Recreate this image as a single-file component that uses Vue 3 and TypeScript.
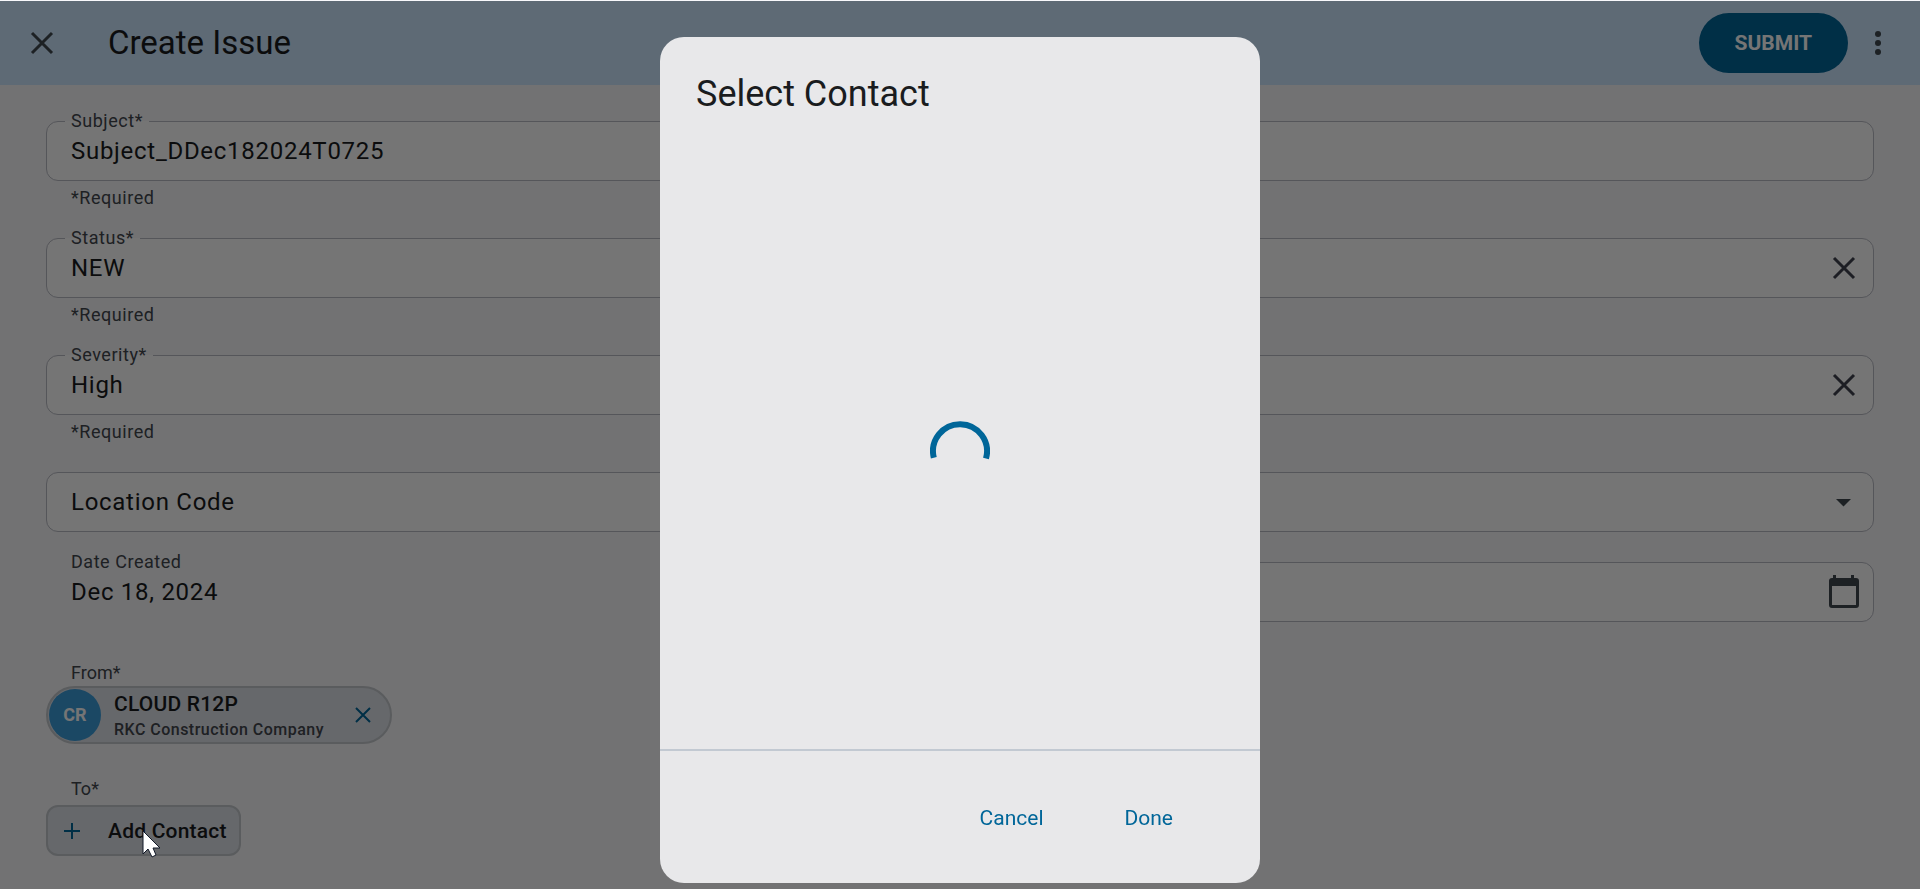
<script setup lang="ts">
import { ref } from 'vue'

interface RequiredField {
  id: string
  label: string
  value: string
  clearable: boolean
}

const requiredFields = ref<RequiredField[]>([
  { id: 'subject', label: 'Subject*', value: 'Subject_DDec182024T0725', clearable: false },
  { id: 'status', label: 'Status*', value: 'NEW', clearable: true },
  { id: 'severity', label: 'Severity*', value: 'High', clearable: true },
])
const dueDate = ref('')
</script>

<template>
  <div class="page">
    <header class="toolbar">
      <button class="icon-button" type="button" aria-label="Close">
        <svg width="36" height="36" viewBox="0 0 36 36"><path d="M8 8 28 28M28 8 8 28" fill="none" stroke="#3f484f" stroke-width="3" /></svg>
      </button>
      <h1>Create Issue</h1>
      <button class="submit" type="submit" form="issue">SUBMIT</button>
      <button class="icon-button menu" type="button" aria-label="More options">
        <svg width="36" height="36" viewBox="0 0 36 36" fill="#3f484f"><circle cx="18" cy="9" r="3" /><circle cx="18" cy="18" r="3" /><circle cx="18" cy="27" r="3" /></svg>
      </button>
    </header>

    <form id="issue" class="form" @submit.prevent>
      <div v-for="field in requiredFields" :key="field.id" class="group">
        <div class="box">
          <label class="notch" :for="field.id">{{ field.label }}</label>
          <input :id="field.id" v-model="field.value" class="value" type="text" />
          <button v-if="field.clearable" class="icon-button" type="button" aria-label="Clear" @click="field.value = ''">
            <svg width="36" height="36" viewBox="0 0 36 36"><path d="M8 8 28 28M28 8 8 28" fill="none" stroke="#3f434f" stroke-width="3" /></svg>
          </button>
        </div>
        <p class="hint">*Required</p>
      </div>

      <div class="box">
        <select class="value select" aria-label="Location Code">
          <option>Location Code</option>
        </select>
        <svg class="arrow" width="36" height="36" viewBox="0 0 36 36"><path d="M10 15h15l-7.500 7.500z" fill="#3f484f" /></svg>
      </div>

      <div class="dates">
        <div class="created">
          <span class="caption">Date Created</span>
          <span class="text">Dec 18, 2024</span>
        </div>
        <div class="box">
          <input v-model="dueDate" class="value" type="text" aria-label="Due date" />
          <button class="icon-button" type="button" aria-label="Open calendar">
            <svg width="36" height="36" viewBox="0 0 36 36"><path fill="#3f484f" fill-rule="evenodd" d="M7 1h3v3h15V1h3v3h2q3 0 3 3v24q0 3-3 3H6q-3 0-3-3V7q0-3 3-3h1zM6 12v19h24V12z" /></svg>
          </button>
        </div>
      </div>

      <section class="people from">
        <h2 class="caption">From*</h2>
        <div class="chip">
          <span class="avatar">CR</span>
          <span class="who">
            <span class="name">CLOUD R12P</span>
            <span class="company">RKC Construction Company</span>
          </span>
          <button class="remove" type="button" aria-label="Remove CLOUD R12P">
            <svg width="18" height="18" viewBox="0 0 18 18"><path d="M2 2 16 16M16 2 2 16" fill="none" stroke="#006699" stroke-width="2" /></svg>
          </button>
        </div>
      </section>

      <section class="people">
        <h2 class="caption">To*</h2>
        <button class="add" type="button">
          <svg width="18" height="18" viewBox="0 0 18 18"><path d="M9 1v16M1 9h16" fill="none" stroke="#006699" stroke-width="2" /></svg>
          Add Contact
        </button>
      </section>
    </form>
  </div>

  <div class="scrim">
    <div class="dialog" role="dialog" aria-modal="true" aria-labelledby="dialog-title">
      <h2 id="dialog-title">Select Contact</h2>
      <div class="loading" role="status" aria-label="Loading">
        <svg width="60" height="60" viewBox="0 0 60 60"><path d="M3.800 37.700A27 27 0 1 1 56 38.500" fill="none" stroke="#006699" stroke-width="6" /></svg>
      </div>
      <footer>
        <button type="button">Cancel</button>
        <button type="button">Done</button>
      </footer>
    </div>
    <svg class="cursor" width="20" height="28" viewBox="0 0 20 28"><path d="M1 1v23l5-5 4 8 4-2-3-7h7z" fill="#fff" stroke="#111827" stroke-width="1" /></svg>
  </div>
</template>

<style>
body {
  margin: 0;
  background: #f8f8fb;
}
</style>

<style scoped>
.page,
.scrim {
  font-family: Roboto, "Open Sans", sans-serif;
  color: #1a1c1e;
}
.page {
  min-height: 100vh;
  box-sizing: border-box;
  padding-top: 1px;
  background: #f8f8fb;
}
button,
input,
select {
  font: inherit;
  color: inherit;
  border: 0;
  padding: 0;
  background: none;
}
h1,
h2,
p {
  margin: 0;
  font-weight: 400;
}
svg {
  display: block;
  flex: none;
}
.toolbar {
  display: flex;
  align-items: center;
  height: 84px;
  box-sizing: border-box;
  padding: 0 24px;
  background: #cce6ff;
}
.toolbar h1 {
  flex: 1;
  margin-left: 48px;
  font-size: 33px;
  line-height: 42px;
}
.submit {
  height: 60px;
  padding: 0 36px;
  border-radius: 30px;
  background: #006699;
  color: #fff;
  font-size: 21px;
  font-weight: 700;
}
.menu {
  margin: 0 0 0 12px;
}
.form {
  padding: 36px 46px 0;
}
.group {
  margin-bottom: 24px;
}
.box {
  position: relative;
  display: flex;
  align-items: center;
  height: 60px;
  box-sizing: border-box;
  border: 1px solid #b9bbc4;
  border-radius: 12px;
  padding: 0 11px 0 24px;
  background: #fff;
}
.notch {
  position: absolute;
  left: 18px;
  top: -13px;
  padding: 0 6px;
  background: linear-gradient(#f8f8fb 50%, #fff 50%);
}
.notch,
.hint,
.caption {
  font-size: 18px;
  line-height: 24px;
  letter-spacing: 0.03em;
  color: #43474e;
}
.value,
.text {
  font-size: 24px;
  line-height: 36px;
  letter-spacing: 0.03em;
}
.value {
  flex: 1;
  min-width: 0;
  outline: 0;
}
.select {
  appearance: none;
  align-self: stretch;
}
.arrow {
  pointer-events: none;
}
.hint {
  padding: 5px 25px 4px;
}
.dates {
  display: grid;
  grid-template-columns: 1fr 1fr;
  gap: 24px;
  margin-top: 30px;
}
.created {
  display: flex;
  flex-direction: column;
  padding-left: 25px;
  margin-top: -12px;
}
.people {
  display: flex;
  flex-direction: column;
  align-items: flex-start;
  margin-top: 33px;
}
.people .caption {
  padding-left: 25px;
  letter-spacing: 0;
}
.from {
  margin-top: 39px;
}
.chip {
  display: flex;
  align-items: center;
  height: 58px;
  box-sizing: border-box;
  margin-top: 1px;
  border: 2px solid #c4c8cc;
  border-radius: 29px;
  padding: 0 18px 0 1px;
  background: #dee2e9;
}
.avatar {
  width: 52px;
  border-radius: 50%;
  background: #3b9ddb;
  color: #fff;
  font-size: 18px;
  font-weight: 700;
  line-height: 52px;
  text-align: center;
}
.who {
  display: flex;
  flex-direction: column;
  margin-left: 13px;
  padding-top: 2px;
  font-weight: 500;
}
.name {
  font-size: 21px;
  line-height: 28px;
  letter-spacing: 0.01em;
}
.company {
  font-size: 16px;
  line-height: 24px;
  letter-spacing: 0.03em;
  color: #43474e;
}
.remove {
  margin-left: 30px;
}
.add {
  display: flex;
  align-items: center;
  gap: 27px;
  height: 51px;
  margin-top: 4px;
  border: 2px solid #c4c8cc;
  border-radius: 12px;
  padding: 0 12px 0 15px;
  background: #dee2e9;
  font-size: 21px;
  font-weight: 500;
  letter-spacing: 0.01em;
}
.scrim {
  position: fixed;
  inset: 1px 0 0;
  display: flex;
  justify-content: center;
  padding: 36px 24px 6px;
  background: rgba(0, 0, 0, 0.54);
}
.dialog {
  display: flex;
  flex-direction: column;
  flex: 0 1 600px;
  border-radius: 24px;
  background: #e8e8ea;
}
.dialog h2 {
  padding: 33px 36px 0;
  font-size: 36px;
  line-height: 48px;
}
.loading {
  flex: 1;
  display: flex;
  align-items: center;
  justify-content: center;
  padding-top: 32px;
}
footer {
  display: flex;
  align-items: center;
  justify-content: flex-end;
  gap: 33px;
  height: 130px;
  padding: 2px 63px 0;
  border-top: 2px solid #c2c9d2;
}
footer button {
  padding: 12px 24px;
  color: #006699;
  font-size: 21px;
  line-height: 30px;
}
.cursor {
  position: absolute;
  left: 142px;
  top: 829px;
}
</style>
